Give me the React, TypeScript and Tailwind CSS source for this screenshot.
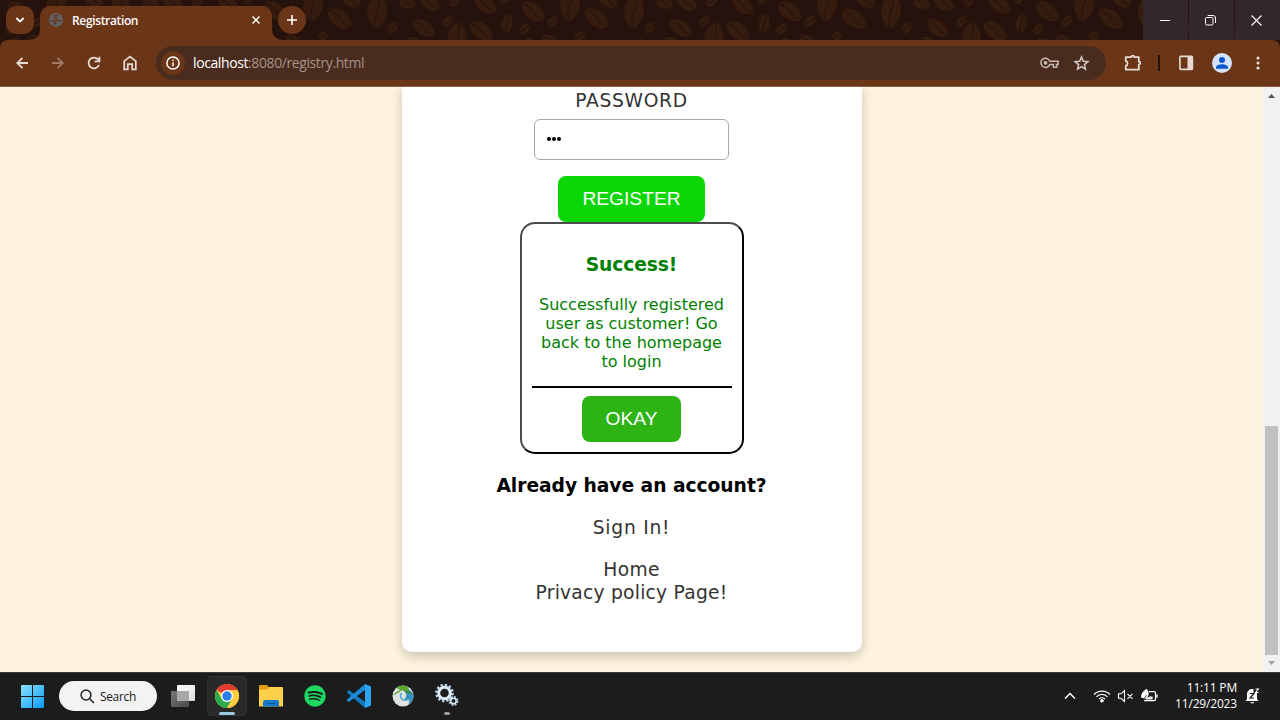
import React from "react";
import { FaSpotify } from "react-icons/fa";

type Bean = [number, number, number, number, number];

// x, y, half length, half width, rotation
const beans: Bean[] = [
  [5, 1, 12, 6.5, 30], [29.7, 3, 12, 6.5, 32], [54.7, 1.5, 7, 4, -45], [85.7, 5, 12.5, 7, 35],
  [105, -1, 6.5, 4, -40], [133, 11.5, 14, 7.5, 37], [170, 4, 17.5, 9.5, -85], [23.7, 28, 13, 7, 35],
  [47.5, 21.5, 7, 4, -45], [57, 40, 18, 9.5, -85], [81, 31, 14, 7.5, 37], [107.3, 23.5, 10, 5.2, -83],
  [124.5, 29, 7.2, 4, -47], [152.7, 21.5, 7, 4, -43], [196.7, 18.5, 14.5, 7.8, 37], [208, 0, 11, 6.5, 33],
  [234, 11, 17.5, 9.5, -86], [249.5, 28, 7, 4, -47], [180, 36, 6.5, 4, -38], [150, 40, 9, 4.5, 25],
  [14, 42, 9, 4.5, 20], [129, 42, 6, 4, 0],
];

function BeanPattern() {
  return (
    <svg className="absolute inset-0" width="1280" height="40" aria-hidden="true">
      <defs>
        <pattern id="beans" x="-114" y="0" width="257" height="60" patternUnits="userSpaceOnUse">
          {beans.map(([x, y, l, w, r], i) => (
            <g key={i} transform={`translate(${x} ${y}) rotate(${r})`}>
              <path
                d={`M${-l} 0C${-l * 0.65} ${-w * 1.35} ${l * 0.65} ${-w * 1.35} ${l} 0C${l * 0.65} ${w * 1.35} ${-l * 0.65} ${w * 1.35} ${-l} 0Z`}
                fill="#351c0e"
              />
              <path
                d={`M${-l} 0Q${-l * 0.4} ${-w * 0.3} 0 0T${l} 0`}
                fill="none"
                stroke="#25120c"
                strokeWidth="1.2"
              />
            </g>
          ))}
        </pattern>
      </defs>
      <rect width="1280" height="40" fill="url(#beans)" />
    </svg>
  );
}

function TitleBar() {
  return (
    <header className="relative h-10 bg-[#25120c]">
      <BeanPattern />
      <div className="relative flex h-10">
        <div className="flex w-10 pt-1.5 pl-1.5">
          <button className="flex size-7 items-center justify-center rounded-[10px] bg-[#6b3518]">
            <svg width="10" height="8" viewBox="0 0 10 8" fill="none" stroke="#fff" strokeWidth="1.8">
              <path d="M1.4 2 5 5.6 8.6 2" />
            </svg>
          </button>
        </div>
        <div className="relative mt-1.5 flex h-[34px] w-[232px] items-center rounded-t-[10px] bg-[#6b3518] pb-1.5 pl-[9px]">
          <svg className="absolute bottom-0 -left-2.5" width="10" height="10">
            <path d="M10 0V10H0A10 10 0 0 0 10 0" fill="#6b3518" />
          </svg>
          <svg className="absolute -right-2.5 bottom-0" width="10" height="10">
            <path d="M0 0V10H10A10 10 0 0 1 0 0" fill="#6b3518" />
          </svg>
          <svg width="14" height="14" viewBox="0 0 14 14">
            <circle cx="7" cy="7" r="7" fill="#5f6368" />
            <path
              d="M1.5 7.6H5c1.300 0 1.800.6 1.800 1.800v.8H5.300v2M8.800 1.500v1H6.500c-1 0-1.300.5-1.300 1.300 0 1 .6 1.200 1.600 1.200h.8v1.300c0 1 .8 1.300 1.800 1.300h2.800"
              fill="none"
              stroke="#6b3518"
              strokeWidth="1.4"
            />
          </svg>
          <span className="mt-px ml-[9px] flex-1 font-['Open_Sans',sans-serif] text-[12px] font-semibold tracking-[-0.35px] text-white">
            Registration
          </span>
          <svg className="mr-3" width="8" height="8" viewBox="0 0 8 8" stroke="#fff" strokeWidth="1.5">
            <path d="m.5.5 7 7m0-7-7 7" />
          </svg>
        </div>
        <button className="mt-1.5 ml-1.5 flex size-7 items-center justify-center rounded-full bg-[#6b3518]">
          <svg width="12" height="12" viewBox="0 0 12 12" stroke="#fff" strokeWidth="1.6">
            <path d="M6 1v10M1 6h10" />
          </svg>
        </button>
        <div className="ml-auto flex w-[137px] gap-px">
          <div className="flex flex-1 items-center justify-center bg-[#34262d] pr-0.5">
            <svg width="10" height="10" stroke="#fff"><path d="M0 5.500h10" /></svg>
          </div>
          <div className="flex flex-1 items-center justify-center bg-[#34262d] pr-0.5">
            <svg width="11" height="11" viewBox="0 0 11 11" fill="none" stroke="#fff">
              <rect x=".5" y="2.500" width="7.500" height="7.500" rx="1.200" />
              <path d="M2.700.5h5.300a2.500 2.500 0 0 1 2.500 2.500v5" />
            </svg>
          </div>
          <div className="flex flex-1 items-center justify-center bg-[#34262d] pr-0.5">
            <svg width="11" height="11" viewBox="0 0 11 11" fill="none" stroke="#fff" strokeWidth="1.100">
              <path d="m.5.5 10 10m0-10-10 10" />
            </svg>
          </div>
        </div>
      </div>
    </header>
  );
}

function Toolbar() {
  return (
    <div className="bg-[#25120c]">
      <div className="flex h-[47px] items-center rounded-t-lg border-b border-[#8d5b42] bg-[#6b3518] pl-4 text-[#e6dcd6]">
        <svg width="12" height="12" viewBox="0 0 12 12" fill="none" stroke="currentColor" strokeWidth="1.800">
          <path d="M12 6H1.500M6.500.800 1.300 6l5.200 5.200" />
        </svg>
        <svg className="ml-6 text-[#a27b67]" width="12" height="12" viewBox="0 0 12 12" fill="none" stroke="currentColor" strokeWidth="1.800">
          <path d="M0 6h10.500M5.500.800 10.700 6l-5.200 5.200" />
        </svg>
        <svg className="ml-[23px]" width="14" height="14" viewBox="0 0 14 14" fill="none" stroke="currentColor" strokeWidth="1.800">
          <path d="M12 9a5.400 5.400 0 1 1-.9-5.600L12.300 4.800M12.400.7v4.700H7.700" />
        </svg>
        <svg className="ml-[22px]" width="14" height="16" viewBox="0 0 14 16" fill="none" stroke="currentColor" strokeWidth="1.7">
          <path d="M1.2 6.2 7 1.7l5.8 4.5v8.2H9.2V9.2H4.8v5.2H1.2Z" />
        </svg>
        <div className="ml-[19px] flex h-[34px] w-[950px] items-center rounded-full bg-[#4a2c1e] pl-[5px]">
          <div className="flex size-6 items-center justify-center rounded-full bg-[#6b3518]">
            <svg width="14" height="14" viewBox="0 0 14 14" fill="none" stroke="#fff" strokeWidth="1.5">
              <circle cx="7" cy="7" r="6.1" />
              <path d="M7 6.200v4M7 3.600v1.500" />
            </svg>
          </div>
          <div className="ml-2 flex-1 font-['Open_Sans',sans-serif] text-[14px] leading-5 tracking-[-0.4px] text-[#a39389]">
            <span className="text-white">localhost</span>:8080/registry.html
          </div>
          <svg width="19" height="12" viewBox="0 0 19 12" fill="none" stroke="#c6bab4" strokeWidth="1.500">
            <path d="M9.800 4.200h8.300v3.300h-1.500v2.800h-3.200V7.500H9.800A4.600 4.600 0 1 1 9.800 4.200Z" />
            <circle cx="5.500" cy="5.800" r="1.900" fill="#c6bab4" stroke="none" />
          </svg>
          <svg className="mr-4 ml-[14px]" width="17" height="16" viewBox="0 0 17 16" fill="none" stroke="#d3cac5" strokeWidth="1.500">
            <path d="m8.500 2 1.800 4.200 4.600.4-3.500 3 1.100 4.500-4-2.400-4 2.400 1.100-4.500-3.500-3 4.600-.4Z" />
          </svg>
        </div>
        <svg className="ml-[18px]" width="18" height="18" viewBox="0 0 18 18" fill="none" stroke="currentColor" strokeWidth="1.800" strokeLinejoin="round">
          <path d="M1.800 3.200H7.300a1.500 1.500 0 0 1 3 0h4.500v4.300a1.500 1.500 0 0 1 0 3v5.200H1.800v-4a2.300 2.300 0 0 0 0-4.500Z" />
        </svg>
        <div className="ml-4 h-4 w-0.5 bg-[#25120c]" />
        <svg className="ml-[18px]" width="16" height="16" viewBox="0 0 16 16">
          <rect x="1.900" y="1.400" width="12.500" height="13" rx="1" fill="none" stroke="currentColor" strokeWidth="1.600" />
          <path d="M9.500 1h5v14h-5z" fill="currentColor" />
        </svg>
        <svg className="ml-[18px]" width="20" height="20" viewBox="0 0 20 20">
          <circle cx="10" cy="10" r="10" fill="#d3e3fd" />
          <circle cx="10" cy="7" r="3" fill="#0b57d0" />
          <path d="M4 15.800v-1.400c0-2 3.500-3.100 6-3.100s6 1.100 6 3.100v1.400Z" fill="#0b57d0" />
        </svg>
        <svg className="ml-6" width="4" height="16" viewBox="0 0 4 16" fill="currentColor">
          <circle cx="2" cy="3" r="1.600" /><circle cx="2" cy="8" r="1.600" /><circle cx="2" cy="13" r="1.600" />
        </svg>
      </div>
    </div>
  );
}

function RegistrationPage() {
  return (
    <main className="flex h-[585px] overflow-hidden bg-[#fff4e0]">
      <div className="flex flex-1 justify-center">
        <section className="flex h-[565px] w-[460px] flex-col items-center rounded-b-[10px] bg-white font-['DejaVu_Sans',sans-serif] text-[18.7px] leading-[23px] whitespace-nowrap text-[#333] shadow-[0_4px_12px_rgba(0,0,0,0.22)]">
          <label className="mt-0.5 tracking-[0.65px]">PASSWORD</label>
          <div className="mt-[7px] flex h-[41px] w-[195px] items-center gap-px rounded-md border border-[#a9a9a9] pb-px pl-3">
            <i className="size-1 rounded-full bg-black" />
            <i className="size-1 rounded-full bg-black" />
            <i className="size-1 rounded-full bg-black" />
          </div>
          <button className="mt-4 h-[46px] w-[147px] rounded-lg bg-[#0cd604] pb-0.5 font-['Liberation_Sans',sans-serif] text-[19.2px] text-white">
            REGISTER
          </button>
          <div className="flex h-[232px] w-[224px] flex-col items-center rounded-[15px] border-2 border-t-[#4c4c4c] border-r-black border-b-black border-l-[#4c4c4c] text-[green]">
            <h3 className="mt-[29px] font-bold tracking-[-0.1px]">Success!</h3>
            <p className="mt-[19px] text-center text-[16px] leading-[19px]">
              Successfully registered<br />user as customer! Go<br />back to the homepage<br />to login
            </p>
            <div className="mt-[15px] h-0.5 w-[200px] bg-black" />
            <button className="mt-2 h-[46px] w-[99px] rounded-lg bg-[#2eb315] pb-0.5 font-['Liberation_Sans',sans-serif] text-[19.2px] text-white">
              OKAY
            </button>
          </div>
          <h3 className="mt-5 font-bold tracking-[-0.04px] text-black">Already have an account?</h3>
          <a className="mt-[19px] tracking-[0.75px]">Sign In!</a>
          <a className="mt-[19px] tracking-[0.3px]">Home</a>
          <a className="tracking-[0.23px]">Privacy policy Page!</a>
        </section>
      </div>
      <div className="flex w-[17px] flex-col items-center bg-[#f1f1f1]">
        <svg className="mt-[7px]" width="7" height="4"><path d="M0 4 3.500 0 7 4" fill="#505050" /></svg>
        <div className="mt-[328px] h-[229px] w-[13px] bg-[#c1c1c1]" />
        <svg className="mt-[6px]" width="7" height="4"><path d="M0 0 3.500 4 7 0" fill="#a3a3a3" /></svg>
      </div>
    </main>
  );
}

function ChromeLogo() {
  return (
    <svg width="24" height="24" viewBox="0 0 24 24">
      <circle cx="12" cy="12" r="12" fill="#ffcd40" />
      <path d="M12 12 1.600 6A12 12 0 0 1 22.400 6H12Z" fill="#e33b2e" />
      <path d="M1.600 6A12 12 0 0 0 12 24l5.200-9-5.200-3-5.200 3Z" fill="#2da94f" />
      <path d="M12 6h10.400A12 12 0 0 1 12 24l5.200-9Z" fill="#ffcd40" />
      <circle cx="12" cy="12" r="6" fill="#fff" />
      <circle cx="12" cy="12" r="4.700" fill="#2b7de9" />
    </svg>
  );
}

function Taskbar() {
  return (
    <footer className="flex h-12 items-center border-t border-[#3d3b39] bg-[#1c1c1c] pb-px pl-[21px] text-white">
      <svg className="mt-px" width="23" height="23" viewBox="0 0 23 23">
        <defs>
          <linearGradient id="win" x1="0" y1="0" x2="1" y2="1">
            <stop stopColor="#8be3fd" /><stop offset="1" stopColor="#0a9bfa" />
          </linearGradient>
        </defs>
        <path d="M1 0h10v11H0V1a1 1 0 0 1 1-1m11 0h10a1 1 0 0 1 1 1v10H12M0 12h11v11H1a1 1 0 0 1-1-1m12-10h11v10a1 1 0 0 1-1 1H12" fill="url(#win)" />
      </svg>
      <div className="ml-[15px] flex h-[30px] w-[98px] items-center rounded-full bg-[#f3f3f3] pl-[21px] font-['Open_Sans',sans-serif] text-[12px] text-[#1b1b1b]">
        <svg width="15" height="15" viewBox="0 0 15 15" fill="none" stroke="#202020" strokeWidth="1.500">
          <circle cx="6" cy="6" r="4.900" /><path d="m9.500 9.500 4.500 4.500" />
        </svg>
        <span className="mt-0.5 ml-[5px] tracking-[-0.35px]">Search</span>
      </div>
      <svg className="ml-3.5" width="24" height="22" viewBox="0 0 24 22">
        <defs>
          <linearGradient id="tv" x1="0" y1="0" x2="1" y2="1"><stop stopColor="#fff" /><stop offset="1" stopColor="#ddd" /></linearGradient>
          <linearGradient id="tb" x1="0" y1="0" x2="1" y2="1"><stop stopColor="#777" /><stop offset="1" stopColor="#4b4b4b" /></linearGradient>
        </defs>
        <rect y="6" width="18" height="16" rx="1" fill="url(#tb)" />
        <rect x="6" width="18" height="16" rx="1" fill="url(#tv)" />
        <path d="M6 6h12v10H6z" fill="#a8a8a8" />
      </svg>
      <div className="relative ml-3 flex h-10 w-10 items-center justify-center rounded border border-[#303030] bg-[#292929]">
        <ChromeLogo />
        <i className="absolute bottom-0 left-[11px] h-[3px] w-4 rounded-full bg-[#9bc9de]" />
      </div>
      <svg className="ml-3" width="24" height="22" viewBox="0 0 24 22">
        <path d="M1 0h7l3 3h-1L8 6H0V1a1 1 0 0 1 1-1" fill="#e29b0d" />
        <path d="M0 4.500h8L10.500 2H23a1 1 0 0 1 1 1v18.500H0Z" fill="#fdd04c" />
        <path d="M4 21.500v-4.500a2 2 0 0 1 2-2h12a2 2 0 0 1 2 2v4.500Z" fill="#1479cc" />
        <path d="M8 18.500h8" stroke="#0b5598" />
      </svg>
      <FaSpotify className="ml-[21px] size-[22px] text-[#1ed760]" />
      <svg className="ml-[21px]" width="24" height="24" viewBox="0 0 24 24">
        <path d="M0 7.500 1.800 6 18 18v6L.2 8.800Z" fill="#1179c1" />
        <path d="M0 16.500 1.800 18 18 6V0L.2 15.200Z" fill="#1c8ad4" />
        <path d="m18 0 6 2.500v19L18 24Z" fill="#2ba5f3" />
      </svg>
      <svg className="ml-[21px]" width="22" height="22" viewBox="0 0 22 22">
        <circle cx="11" cy="11" r="10.500" fill="#dfe2e3" />
        <path d="M1 10C3.500 7.500 6 6 8.500 5L4.500 3C7 .5 12-.5 15 1.500c1.500 1 2 2.500 1.500 4-2-1-4-1-6-.2C7 6.500 5 9.500 1 10" fill="#58a52b" />
        <path d="M16 4.500c3 1 5 3.500 5.500 6.500 0 4-2.500 7.500-5.500 9 1.200-2 1.500-4 1-6-1.500 1-3.500 1.200-5 .2 2-1 2.700-3 2-5.500 1.500-.7 2.500-2 2-4.200" fill="#3591bd" />
        <path d="M10.500 5.300c4-1.300 8 .5 10 4-2.500-1.300-4.500-1.300-6.300-.5-.5-1.500-2-2.800-3.700-3.500" fill="#3b8a3a" />
        <path d="M9.500 8c-2 3-1 6 2.500 7 2 .5 4 0 5-1" fill="none" stroke="#57a8d0" strokeWidth="1.600" />
      </svg>
      <div className="relative ml-[21px] h-10 w-7">
        <svg className="mt-2" width="24" height="24" viewBox="0 0 24 24" fill="none">
          <circle cx="9.500" cy="9" r="8" stroke="#bcd2e8" strokeWidth="2.600" strokeDasharray="2.300 1.890" />
          <circle cx="9.500" cy="9" r="5.800" stroke="#dceaf8" strokeWidth="3" />
          <circle cx="18.500" cy="17" r="4" stroke="#b6cde2" strokeWidth="2" strokeDasharray="1.900 1.240" />
          <circle cx="18.500" cy="17" r="2.700" stroke="#dceaf8" strokeWidth="1.500" />
        </svg>
        <i className="absolute bottom-px left-[9px] h-[3px] w-1.5 rounded-full bg-[#9a9a9a]" />
      </div>
      <div className="mr-[20px] ml-auto flex items-center">
        <svg width="12" height="8" viewBox="0 0 12 8" fill="none" stroke="#fff" strokeWidth="1.500"><path d="m1 6.500 5-5 5 5" /></svg>
        <svg className="ml-[17px]" width="18" height="14" viewBox="0 0 18 14" fill="none" stroke="#fff" strokeWidth="1.200">
          <path d="M1 5.500a11 11 0 0 1 16 0M3.500 7.800a7.500 7.500 0 0 1 11 0M6 10a4.200 4.200 0 0 1 6 0" /><circle cx="9" cy="11.800" r="1.200" fill="#fff" />
        </svg>
        <svg className="ml-[6px]" width="17" height="14" viewBox="0 0 17 14" fill="none" stroke="#fff" strokeWidth="1.100">
          <path d="M1.500 4.800H4L7.500 1.500v11L4 9.300H1.500ZM10.500 4.800l5 5m0-5-5 5" />
        </svg>
        <svg className="ml-[7px]" width="17" height="14" viewBox="0 0 17 14" fill="none" stroke="#fff" strokeWidth="1.200">
          <path d="M8 2.700h5q1.500 0 1.500 1.500v6q0 1.500-1.500 1.500H3M16 5.300v3.500" />
          <path d="M.8 8.500C-.2 4 3 3 5.500.500 8 4 7.500 8.500 3 9.500" fill="#fff" />
          <path d="M5 10 9 8h2v2Z" fill="#fff" />
          <path d="m1.500 12 4-6" stroke="#1c1c1c" strokeWidth=".8" />
        </svg>
        <div className="ml-[13px] w-[66px] text-right font-['Open_Sans',sans-serif] text-[12px] leading-4 tracking-[-0.18px] whitespace-nowrap">
          11:11 PM<br />11/29/2023
        </div>
        <svg className="ml-[8px]" width="15" height="16" viewBox="0 0 15 16">
          <path d="M2 11V6a5 5 0 0 1 5-5h1.500v4H12v6l1.500 2H.5ZM5 14.200h4.500Q7.200 17 5 14.200" fill="#fff" />
          <path d="M5 5.500h4L5 10h4" fill="none" stroke="#1c1c1c" strokeWidth="1.200" />
          <path d="M10.500 1h3l-3 3.500h3" fill="none" stroke="#fff" strokeWidth="1.100" />
        </svg>
      </div>
    </footer>
  );
}

export default function App() {
  return (
    <div className="flex h-[720px] w-[1280px] flex-col overflow-hidden">
      <TitleBar />
      <Toolbar />
      <RegistrationPage />
      <Taskbar />
    </div>
  );
}
